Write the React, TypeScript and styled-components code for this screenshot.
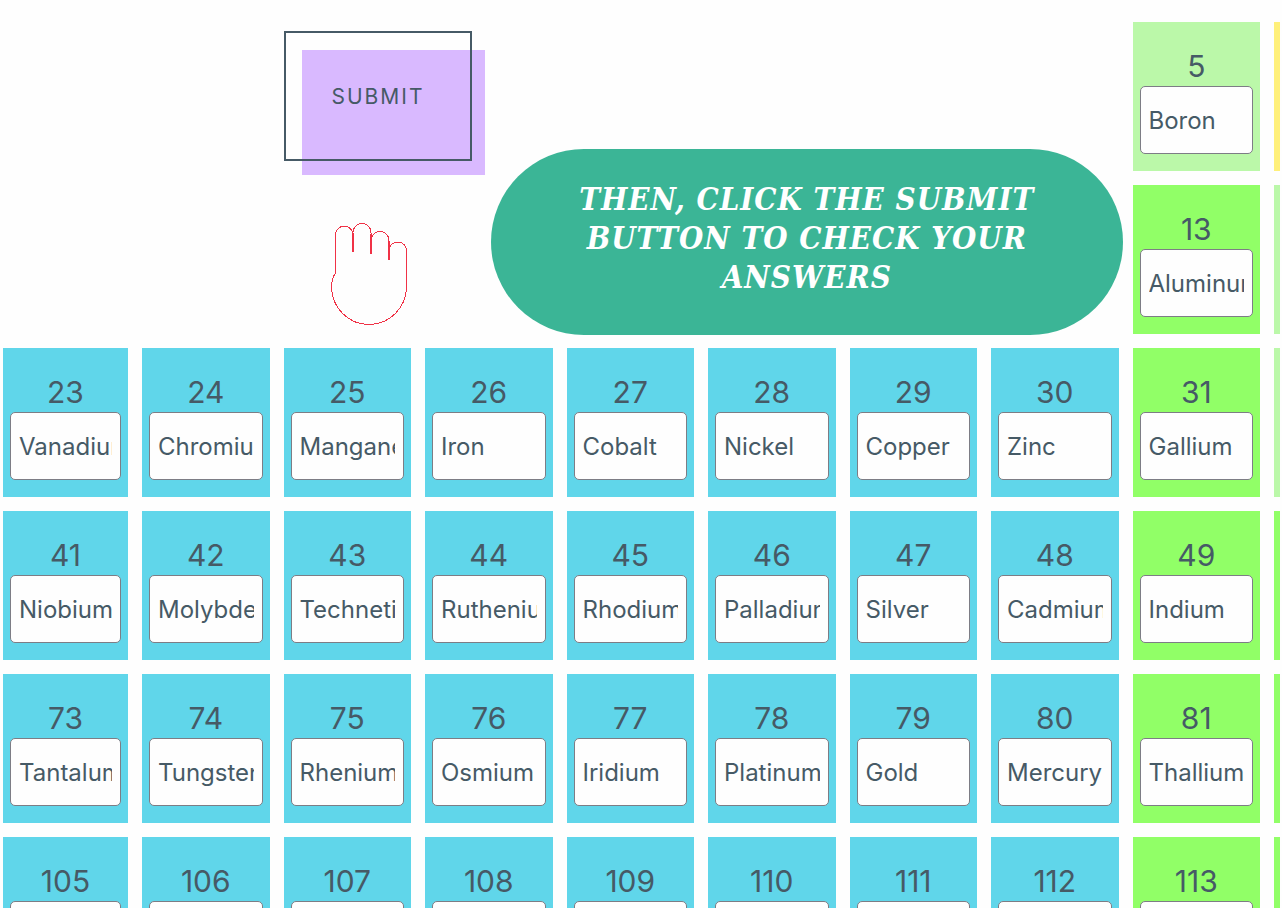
import React from "react";
import styled, { createGlobalStyle } from "styled-components";

const tones = {
  metal: "#60d6ea",
  post: "#91ff67",
  metalloid: "#bbf8a9",
  nonmetal: "#fff07a",
};
type Tone = keyof typeof tones;

const ink = "#465a66";

const GlobalStyle = createGlobalStyle`
  *, *::before { box-sizing: border-box; }
  body {
    margin: 0;
    background: #fefefe;
    color: ${ink};
    font-family: Inter, "Liberation Sans", sans-serif;
  }
`;

const Table = styled.form`
  display: grid;
  grid-template-columns: 125px repeat(8, minmax(0, 1fr)) 6px;
  grid-auto-rows: 149px;
  gap: 14px;
  height: 100vh;
  padding: 22px 2px 0 3px;
  overflow: hidden;
`;

const Intro = styled.div`
  grid-column: 1 / 9;
  grid-row: 1 / 3;
  display: flex;
  align-items: flex-start;
  gap: 19px;
  margin-right: -4px;
`;

const Actions = styled.div`
  display: flex;
  flex-direction: column;
  align-items: center;
  flex: none;
  gap: 60px;
  padding: 9px 0 0 281px;
`;

const SubmitButton = styled.button`
  position: relative;
  z-index: 0;
  width: 188px;
  height: 130px;
  padding: 0;
  border: 0;
  background: transparent;
  color: ${ink};
  font: inherit;
  font-size: 21px;
  letter-spacing: 2px;
  cursor: pointer;

  &::before,
  &::after {
    content: "";
    position: absolute;
    z-index: -1;
  }
  &::before {
    top: 19px;
    left: 18px;
    width: 183px;
    height: 125px;
    background: #d9b9ff;
  }
  &::after {
    inset: 0;
    border: 2px solid ${ink};
  }
`;

const Hand = styled.svg`
  width: 78px;
  height: 104px;
  margin-right: 16px;
`;

const Banner = styled.p`
  flex: 1;
  margin: 127px 0 0;
  padding: 31px 20px 38px;
  border-radius: 93px;
  background: #3bb596;
  color: #fff;
  font-family: "DejaVu Serif Condensed", "DejaVu Serif", serif;
  font-size: 31px;
  font-style: italic;
  font-weight: 700;
  letter-spacing: 1px;
  line-height: 39px;
  text-align: center;
`;

const Tile = styled.label<{ $tone: Tone; $column: number; $row: number }>`
  grid-column: ${(p) => p.$column};
  grid-row: ${(p) => p.$row};
  display: flex;
  flex-direction: column;
  padding: 24px 7px 0;
  overflow: hidden;
  background: ${(p) => tones[p.$tone]};
`;

const Sliver = styled(Tile).attrs({ as: "div" })`
  padding: 0;
`;

const AtomicNumber = styled.span`
  font-size: 30px;
  line-height: 40px;
  text-align: center;
`;

const NameInput = styled.input`
  width: 100%;
  height: 68px;
  padding: 0 8px;
  border: 1px solid #7d7d85;
  border-radius: 5px;
  background: #fefefe;
  color: inherit;
  font: inherit;
  font-size: 24px;
`;

const rows: { row: number; start: number; first: number; names: string[]; edge: Tone }[] = [
  { row: 1, start: 9, first: 5, names: ["Boron"], edge: "nonmetal" },
  { row: 2, start: 9, first: 13, names: ["Aluminum"], edge: "metalloid" },
  { row: 3, start: 1, first: 23, names: ["Vanadium", "Chromium", "Manganese", "Iron", "Cobalt", "Nickel", "Copper", "Zinc", "Gallium"], edge: "metalloid" },
  { row: 4, start: 1, first: 41, names: ["Niobium", "Molybdenum", "Technetium", "Ruthenium", "Rhodium", "Palladium", "Silver", "Cadmium", "Indium"], edge: "post" },
  { row: 5, start: 1, first: 73, names: ["Tantalum", "Tungsten", "Rhenium", "Osmium", "Iridium", "Platinum", "Gold", "Mercury", "Thallium"], edge: "post" },
  { row: 6, start: 1, first: 105, names: ["", "", "", "", "", "", "", "", ""], edge: "post" },
];

const toneOf = (column: number, row: number): Tone =>
  column < 9 ? "metal" : row === 1 ? "metalloid" : "post";

export default function App() {
  return (
    <>
      <GlobalStyle />
      <Table onSubmit={(e) => e.preventDefault()}>
        <Intro>
          <Actions>
            <SubmitButton type="submit">SUBMIT</SubmitButton>
            <Hand viewBox="0 0 78 104" fill="none" stroke="#f03246" shapeRendering="crispEdges" aria-hidden="true">
              <path
                fill="#fefefe"
                d="M4.500 52V14A8.750 9 0 0 1 22 14V11.500A9 9 0 0 1 40 11.500V19.500A9 9 0 0 1 58 19.500V29.500A8.750 8.500 0 0 1 75.500 29.500V65.500A37.500 38 0 0 1 0.500 65.500Q1 57 4.500 52Z"
              />
              <path strokeWidth="2" d="M22 12V31M40 13V33M58 20V39" />
            </Hand>
          </Actions>
          <Banner>
            THEN, CLICK THE SUBMIT
            <br />
            BUTTON TO CHECK YOUR
            <br />
            ANSWERS
          </Banner>
        </Intro>
        {rows.map(({ row, start, first, names, edge }) => (
          <React.Fragment key={row}>
            {names.map((name, i) => (
              <Tile key={i} $tone={toneOf(start + i, row)} $column={start + i} $row={row}>
                <AtomicNumber>{first + i}</AtomicNumber>
                <NameInput type="text" defaultValue={name} />
              </Tile>
            ))}
            <Sliver $tone={edge} $column={10} $row={row} />
          </React.Fragment>
        ))}
      </Table>
    </>
  );
}
